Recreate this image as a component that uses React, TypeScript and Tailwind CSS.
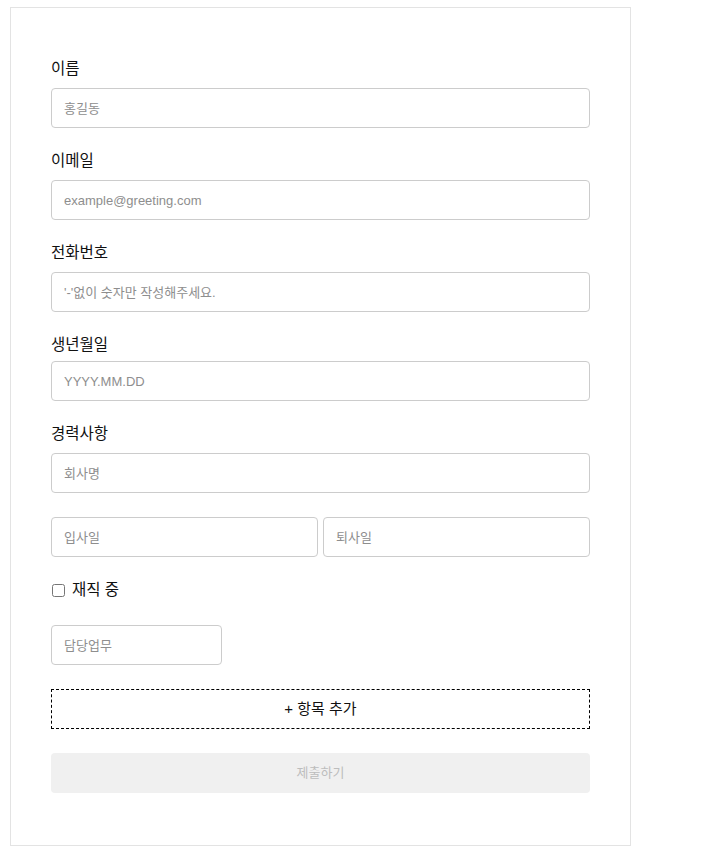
import { useState } from "react";

const FONT = "font-['Liberation_Sans','Noto_Sans_CJK_KR',sans-serif]";

const inputCls =
  "block h-[40px] w-full rounded-[4px] border border-[#cccccc] bg-white px-3 text-[13px] text-[#333] outline-none placeholder:text-[#8e8e8e]";

function Field({ label, placeholder, gap = "mt-[10px]" }: { label: string; placeholder: string; gap?: string }) {
  return (
    <div>
      <label className="block h-[20px] text-[15.5px] leading-[22px] text-[#111]">{label}</label>
      <input className={`${inputCls} ${gap}`} placeholder={placeholder} />
    </div>
  );
}

export default function App() {
  const [working, setWorking] = useState(false);

  return (
    <div className={`${FONT} min-h-[866px] bg-white pt-[7px] pl-[10px]`}>
      <form className="h-[839px] w-[621px] border border-[#e3e3e3] bg-white px-[40px] pt-[50px]">
        <div className="flex flex-col gap-[22px]">
          <Field label="이름" placeholder="홍길동" />
          <Field label="이메일" placeholder="example@greeting.com" />
          <Field label="전화번호" placeholder="'-'없이 숫자만 작성해주세요." />
          <Field label="생년월일" placeholder="YYYY.MM.DD" gap="mt-[7px]" />
          <Field label="경력사항" placeholder="회사명" />
        </div>

        <div className="mt-[24px] flex gap-[5px]">
          <input className={inputCls} placeholder="입사일" />
          <input className={inputCls} placeholder="퇴사일" />
        </div>

        <label className="mt-[22px] flex h-[20px] items-center gap-[7px] pt-[2px] text-[15.5px] leading-[20px] text-[#111]">
          <input
            type="checkbox"
            checked={working}
            onChange={(e) => setWorking(e.target.checked)}
            className="ml-[1px] h-[13px] w-[13px]"
          />
          재직 중
        </label>

        <input className={`${inputCls} mt-[26px] !w-[171px]`} placeholder="담당업무" />

        <button
          type="button"
          className="mt-[24px] block h-[40px] w-full border border-dashed border-black bg-white text-[15px] text-[#111]"
        >
          + 항목 추가
        </button>

        <button
          type="submit"
          disabled
          className="mt-[24px] block h-[40px] w-full rounded-[4px] bg-[#f0f0f0] text-[13px] text-[#bdbdbd]"
        >
          제출하기
        </button>
      </form>
    </div>
  );
}
